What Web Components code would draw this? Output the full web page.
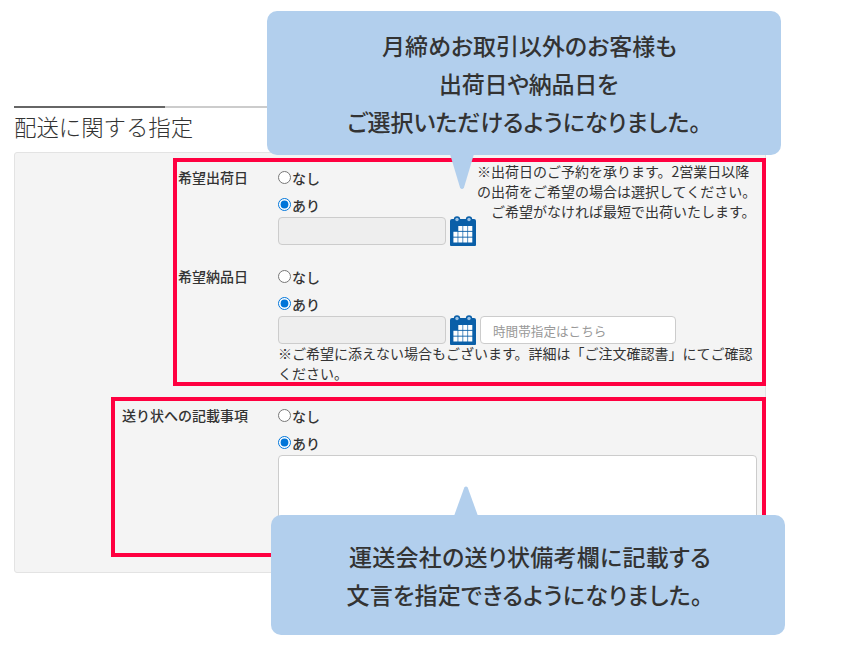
<!DOCTYPE html>
<html lang="ja"><head><meta charset="utf-8">
<style>
html,body{margin:0;padding:0;background:#fff}
body{font-family:"Noto Sans CJK JP","Noto Sans",sans-serif;color:#333;width:860px;height:646px;overflow:hidden;position:relative}
</style></head><body>
<delivery-page>
  <span slot="title">配送に関する指定</span>
  <form-row>
    <span slot="label">希望出荷日</span>
    <div style="display:flex">
      <div style="width:199px;padding-top:3px;flex:none">
        <radio-opt name="a">なし</radio-opt>
        <radio-opt name="a" checked>あり</radio-opt>
        <date-field></date-field>
      </div>
      <note-text>※出荷日のご予約を承ります。2営業日以降<br>の出荷をご希望の場合は選択してください。<br>　ご希望がなければ最短で出荷いたします。</note-text>
    </div>
  </form-row>
  <form-row gap="15">
    <span slot="label">希望納品日</span>
    <div style="padding-top:3px">
      <radio-opt name="b">なし</radio-opt>
      <radio-opt name="b" checked>あり</radio-opt>
      <date-field time></date-field>
      <note-text style="margin-top:-1px">※ご希望に添えない場合もございます。詳細は「ご注文確認書」にてご確認ください。</note-text>
    </div>
  </form-row>
  <form-row gap="16">
    <span slot="label">送り状への記載事項</span>
    <div style="padding-top:3px">
      <radio-opt name="c">なし</radio-opt>
      <radio-opt name="c" checked>あり</radio-opt>
      <memo-area></memo-area>
    </div>
  </form-row>
</delivery-page>
<red-frame style="left:173px;top:158px;width:593px;height:228px"></red-frame>
<red-frame style="left:111px;top:397px;width:655px;height:160px"></red-frame>
<call-out side="down" tip="195" style="left:267px;top:11px;width:514px;height:144px;padding-bottom:1px">
  <div style="padding-left:11px">月締めお取引以外のお客様も</div>
  <div style="padding-left:9px;letter-spacing:-.25px">出荷日や納品日を</div>
  <div>ご選択いただけるようになりました。</div>
</call-out>
<call-out side="up" tip="194.5" style="left:271px;top:515px;width:514px;height:120px;letter-spacing:.25px">
  <div style="padding-left:4px">運送会社の送り状備考欄に記載する</div>
  <div style="padding-right:7px">文言を指定できるようになりました。</div>
</call-out>
<script>
function def(name,html,extra){
  customElements.define(name,class extends HTMLElement{
    constructor(){super();this.attachShadow({mode:'open'}).innerHTML=html;}
    connectedCallback(){extra&&extra.call(this,this.shadowRoot);}
  });
}
def('delivery-page',`<style>
:host{display:block;padding:106px 0 0 14px;width:752px}
.rule{height:2px;background:#ccc;position:relative;display:flex}
.rule i{display:block;width:151px;background:#666}
h2{margin:0;font-size:22.4px;font-weight:300;line-height:36px;height:44px;color:#333}
.panel{box-sizing:border-box;height:421px;background:#f4f4f4;border:1px solid #e3e3e3;border-radius:3px;padding-top:8px}
</style><div class="rule"><i></i></div><h2><slot name="title"></slot></h2><div class="panel"><slot></slot></div>`);
def('form-row',`<style>
:host{display:grid;grid-template-columns:233px 479px;column-gap:30px}
.l{font-size:14px;font-weight:500;line-height:20px;text-align:right;padding-top:6px;white-space:nowrap}
</style><div class="l"><slot name="label"></slot></div><div><slot></slot></div>`,function(r){
  const g=this.getAttribute('gap'); if(g) this.style.marginTop=g+'px';
});
def('radio-opt',`<style>
:host{display:flex;align-items:center;height:27px;font-size:14px;font-weight:500;line-height:20px}
input{margin:0 1px 0 0;width:13px;height:13px;accent-color:#0075d9}
</style><input type="radio"><span><slot></slot></span>`,function(r){
  const i=r.querySelector('input'); i.name=this.getAttribute('name'); i.checked=this.hasAttribute('checked');
});
def('date-field',`<style>
:host{display:flex;align-items:center;height:28px;white-space:nowrap;margin-top:-1px}
.in{box-sizing:border-box;width:168px;height:28px;background:#eee;border:1px solid #ccc;border-radius:4px;flex:none}
svg{margin-left:4px;flex:none;display:block;margin-top:-1px}
input{box-sizing:border-box;width:196px;height:28px;margin-left:4px;border:1px solid #ccc;border-radius:4px;background:#fff;padding:0 12px;font:12.6px "Noto Sans CJK JP",sans-serif;flex:none}
input::placeholder{color:#999;opacity:1}
</style><div class="in"></div>
<svg width="26" height="30" viewBox="0 0 26 30"><path fill="#0a5fa8" d="M2 3h22a2 2 0 0 1 2 2v24a1 1 0 0 1-1 1H1a1 1 0 0 1-1-1V5a2 2 0 0 1 2-2z"/><circle cx="7" cy="3.5" r="3.2" fill="#0a5fa8"/><circle cx="19" cy="3.5" r="3.2" fill="#0a5fa8"/><circle cx="7" cy="3.5" r="1.7" fill="#9cc3e6"/><circle cx="19" cy="3.5" r="1.7" fill="#9cc3e6"/><g fill="#fff" id="g"></g></svg>`,function(r){
  let s='';for(let y=0;y<3;y++)for(let x=0;x<4;x++){ if(y==0&&x==0)continue; s+=`<rect x="${3.4+x*4.9}" y="${10+y*5.8}" width="4.2" height="4.9"/>`;}
  r.getElementById('g').innerHTML=s;
  if(this.hasAttribute('time')){const i=document.createElement('input');i.placeholder='時間帯指定はこちら';r.appendChild(i);}
});
def('note-text',`<style>
:host{display:block;font-size:14px;line-height:20px}
</style><slot></slot>`);
def('memo-area',`<style>
:host{display:block}
textarea{display:block;box-sizing:border-box;width:479px;height:92px;border:1px solid #ccc;border-radius:4px;background:#fff;margin:-1px 0 0;resize:none}
</style><textarea></textarea>`);
def('red-frame',`<style>
:host{display:block;position:absolute;box-sizing:border-box;border:4px solid #ff0040}
</style>`);
def('call-out',`<style>
:host{display:flex;position:absolute;box-sizing:border-box;align-items:center;justify-content:center;text-align:center;background:#b2cfed;border-radius:10px;font-size:23px;font-weight:500;line-height:38px;color:#333;font-feature-settings:"palt"}
svg{position:absolute;display:block}
</style><div><slot></slot></div>`,function(r){
  const up=this.getAttribute('side')==='up';
  const tip=+this.getAttribute('tip');
  const s=document.createElementNS('http://www.w3.org/2000/svg','svg');
  s.setAttribute('width','24');s.setAttribute('height','36');s.setAttribute('viewBox','0 0 24 36');
  s.style.left=(tip-12)+'px';
  if(up){s.style.top='-29px';s.style.height='30px';s.setAttribute('viewBox','0 0 24 30');s.innerHTML='<path fill="#b2cfed" d="M0 30 10.3 1.5Q12 -.5 13.7 1.5L24 30z"/>';}
  else{s.style.bottom='-35px';s.innerHTML='<path fill="#b2cfed" d="M0 0 10 33.5Q12 36.5 14 33.5L24 0z"/>';}
  r.appendChild(s);
});
</script>
</body></html>
